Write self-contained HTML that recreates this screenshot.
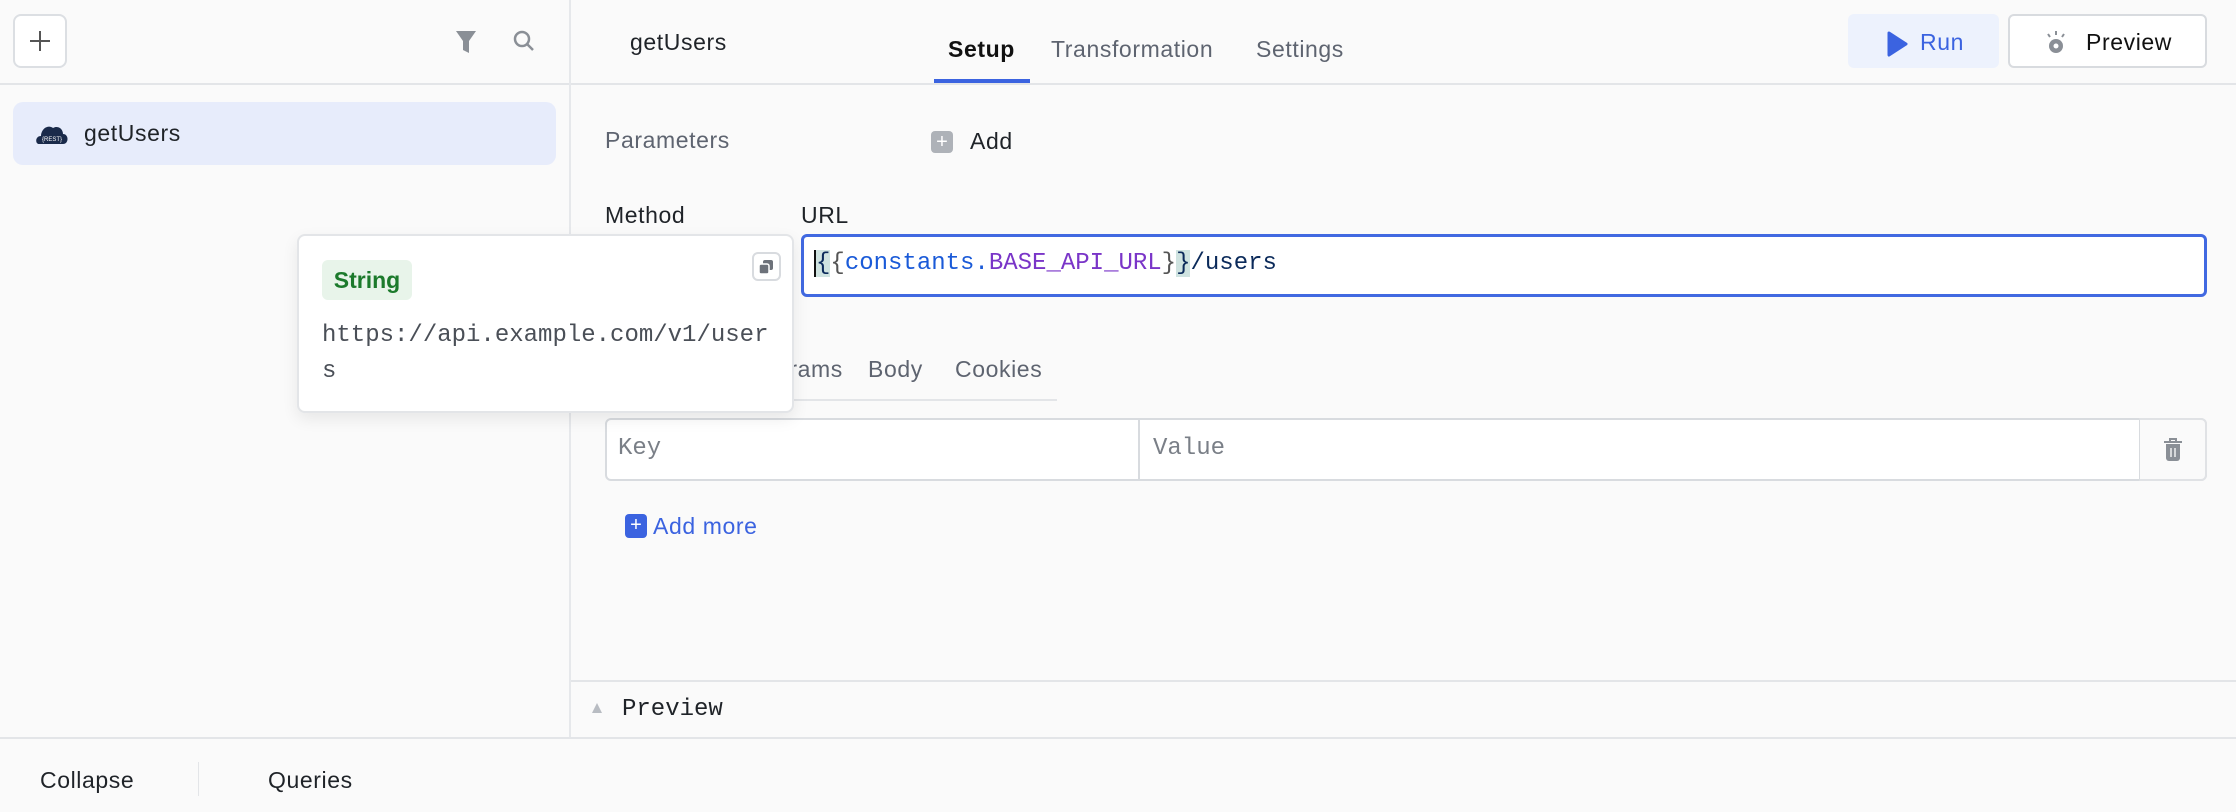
<!DOCTYPE html>
<html><head><meta charset="utf-8"><style>
*{box-sizing:border-box;margin:0;padding:0}
body{width:2236px;height:812px;background:#fafafa;font-family:"Liberation Sans",sans-serif;position:relative;overflow:hidden;color:#1f2328}
.a{position:absolute;white-space:nowrap}
.t{font-size:23px;letter-spacing:0.6px}
.mono{font-family:"Liberation Mono","DejaVu Sans Mono",monospace;font-size:24px;letter-spacing:0}
</style></head><body>
<!-- sidebar -->
<div class="a" style="left:13px;top:14px;width:54px;height:54px;border:2px solid #dcdfe3;border-radius:8px;background:#fff"></div>
<div class="a" style="left:30px;top:40px;width:20px;height:2px;background:#555"></div>
<div class="a" style="left:39px;top:31px;width:2px;height:20px;background:#555"></div>
<svg class="a" style="left:454px;top:29px" width="24" height="26" viewBox="0 0 24 26"><path d="M2 2h20l-7 10v12l-6-3v-9z" fill="#8a8f96"/></svg>
<svg class="a" style="left:511px;top:28px" width="26" height="26" viewBox="0 0 26 26"><circle cx="11" cy="11" r="7" stroke="#8a8f96" stroke-width="2.5" fill="none"/><path d="M16 16l6 6" stroke="#8a8f96" stroke-width="2.5"/></svg>
<div class="a" style="left:0;top:83px;width:2236px;height:2px;background:#e3e5e8"></div>
<div class="a" style="left:569px;top:0;width:2px;height:737px;background:#e6e8eb"></div>
<div class="a" style="left:13px;top:102px;width:543px;height:63px;background:#e7ecfb;border-radius:10px"></div>
<svg class="a" style="left:35px;top:122px" width="34" height="26" viewBox="0 0 34 26"><path d="M4 22c-4 0-4-8 2-8 0-7 7-12 12-8 5-3 10 1 10 6 6 0 6 10 0 10z" fill="#1a2a4a"/><text x="17" y="19" font-size="6" fill="#fff" text-anchor="middle" font-family="Liberation Sans">{REST}</text></svg>
<div class="a t" style="left:84px;top:120px;color:#1f2328">getUsers</div>
<!-- header -->
<div class="a t" style="left:630px;top:29px;color:#1f2328">getUsers</div>
<div class="a t" style="left:948px;top:36px;color:#111;font-weight:bold">Setup</div>
<div class="a t" style="left:1051px;top:36px;color:#5e6470">Transformation</div>
<div class="a t" style="left:1256px;top:36px;color:#5e6470">Settings</div>
<div class="a" style="left:934px;top:79px;width:96px;height:4px;background:#3b63e0"></div>
<div class="a" style="left:1848px;top:14px;width:151px;height:54px;background:#edf2fd;border-radius:6px"></div>
<svg class="a" style="left:1886px;top:31px" width="22" height="26" viewBox="0 0 22 26"><path d="M3 2 L20 13 L3 24Z" fill="#3b63e0" stroke="#3b63e0" stroke-width="3" stroke-linejoin="round"/></svg>
<div class="a t" style="left:1920px;top:29px;color:#3b63e0">Run</div>
<div class="a" style="left:2008px;top:14px;width:199px;height:54px;background:#fff;border:2px solid #d8dbdf;border-radius:6px"></div>
<svg class="a" style="left:2043px;top:28px" width="26" height="28" viewBox="0 0 26 28"><circle cx="13" cy="18" r="7" fill="#8a8f96"/><circle cx="13" cy="18" r="2.5" fill="#fff"/><path d="M13 3v4M5 6l2 3M21 6l-2 3" stroke="#8a8f96" stroke-width="2"/></svg>
<div class="a t" style="left:2086px;top:29px;color:#111">Preview</div>
<!-- params -->
<div class="a t" style="left:605px;top:127px;color:#5e6470">Parameters</div>
<div class="a" style="left:931px;top:131px;width:22px;height:22px;background:#aeb2b8;border-radius:4px;color:#fff;font-size:20px;line-height:22px;text-align:center">+</div>
<div class="a t" style="left:970px;top:128px;color:#1f2328">Add</div>
<div class="a t" style="left:605px;top:202px;color:#1f2328">Method</div>
<div class="a t" style="left:801px;top:202px;color:#1f2328">URL</div>
<div class="a" style="left:801px;top:234px;width:1406px;height:63px;background:#fff;border:3px solid #4169e1;border-radius:6px"></div>
<div class="a mono" style="left:814px;top:250px;color:#0b2a5a"><span style="background:#cfe3e0;border-left:2px solid #111">{</span><span style="color:#555">{</span><span style="color:#1a5ad8">constants.</span><span style="color:#7a35c8">BASE_API_URL</span><span style="color:#555">}</span><span style="background:#cfe3e0">}</span>/users</div>
<!-- sub tabs -->
<div class="a t" style="left:760px;top:356px;color:#5e6470">Params</div>
<div class="a t" style="left:868px;top:356px;color:#5e6470">Body</div>
<div class="a t" style="left:955px;top:356px;color:#5e6470">Cookies</div>
<div class="a" style="left:605px;top:399px;width:452px;height:2px;background:#e3e5e8"></div>
<div class="a" style="left:605px;top:418px;width:1602px;height:63px;background:#fff;border:2px solid #d8dbdf;border-radius:6px"></div>
<div class="a" style="left:1138px;top:418px;width:2px;height:63px;background:#d8dbdf"></div>
<div class="a" style="left:2139px;top:418px;width:68px;height:63px;background:#fafafa;border:2px solid #e0e2e5;border-left:1px solid #d8dbdf;border-radius:0 6px 6px 0"></div>
<svg class="a" style="left:2161px;top:437px" width="24" height="26" viewBox="0 0 24 26"><path d="M3 5h18M9 5V2h6v3" stroke="#8a8f96" stroke-width="2" fill="none"/><path d="M5 7h14v14a3 3 0 0 1-3 3H8a3 3 0 0 1-3-3z" fill="#8a8f96"/><path d="M10 11v9M14 11v9" stroke="#fff" stroke-width="1.3"/></svg>
<div class="a mono" style="left:618px;top:435px;color:#7a7f87">Key</div>
<div class="a mono" style="left:1153px;top:435px;color:#7a7f87">Value</div>
<div class="a" style="left:625px;top:514px;width:22px;height:24px;background:#3b63e0;border-radius:4px;color:#fff;font-size:20px;line-height:23px;text-align:center">+</div>
<div class="a t" style="left:653px;top:513px;color:#3b63e0">Add more</div>
<!-- preview bar -->
<div class="a" style="left:571px;top:680px;width:1665px;height:2px;background:#e3e5e8"></div>
<svg class="a" style="left:591px;top:702px" width="12" height="12"><path d="M6 1L11 11H1Z" fill="#b8bcc2"/></svg>
<div class="a mono" style="left:622px;top:696px;color:#1f2328">Preview</div>
<!-- bottom -->
<div class="a" style="left:0;top:737px;width:2236px;height:2px;background:#e3e5e8"></div>
<div class="a t" style="left:40px;top:767px;color:#1f2328">Collapse</div>
<div class="a" style="left:198px;top:762px;width:1px;height:34px;background:#e3e5e8"></div>
<div class="a t" style="left:268px;top:767px;color:#1f2328">Queries</div>
<!-- tooltip -->
<div class="a" style="left:297px;top:234px;width:497px;height:179px;background:#fff;border:2px solid #e3e5e8;border-radius:8px;box-shadow:0 6px 16px rgba(0,0,0,.08)"></div>
<div class="a" style="left:322px;top:260px;width:90px;height:40px;background:#e8f4ea;border-radius:6px;color:#1c7a2c;font-size:23px;font-weight:bold;line-height:40px;text-align:center">String</div>
<div class="a" style="left:752px;top:252px;width:29px;height:29px;border:2px solid #d8dbdf;border-radius:6px;background:#fff"></div>
<svg class="a" style="left:757px;top:258px" width="19" height="18"><rect x="6" y="2" width="10" height="10" rx="2" fill="#6d727a"/><rect x="2" y="6" width="10" height="10" rx="2" fill="#6d727a" stroke="#fff" stroke-width="1.5"/></svg>
<div class="a mono" style="left:322px;top:318px;color:#4a4f57;line-height:36px">https://api.example.com/v1/user<br>s</div>
</body></html>
